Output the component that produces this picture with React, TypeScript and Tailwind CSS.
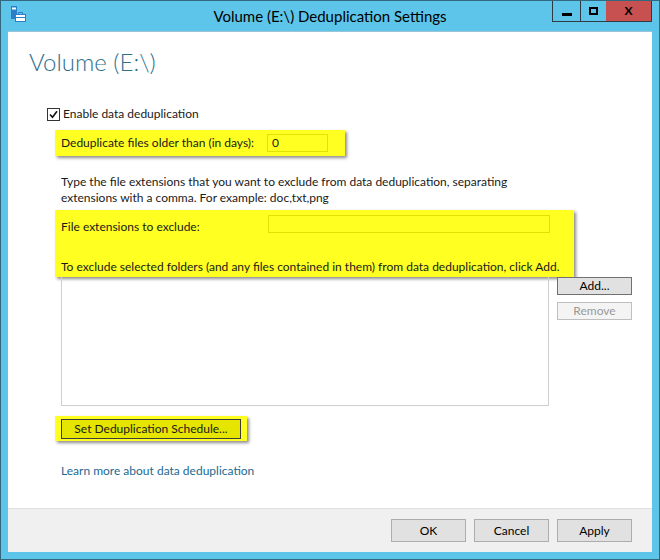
import React from "react";

function WinButton({
  children,
  disabled,
  small,
  dark,
}: {
  children: React.ReactNode;
  disabled?: boolean;
  small?: boolean;
  dark?: boolean;
}) {
  return (
    <button
      type="button"
      disabled={disabled}
      className={`${small ? "h-[18px]" : "h-[23px]"} w-[75px] border text-[12px] leading-none ${
        disabled
          ? "border-[#bfbfbf] bg-[#f4f4f4] text-[#9a9a9a]"
          : `${dark ? "border-[#707070]" : "border-[#adadad]"} bg-[#e1e1e1] text-black`
      }`}
    >
      {children}
    </button>
  );
}

function AppIcon() {
  return (
    <svg width="17" height="19" viewBox="0 0 17 19" fill="none">
      <rect x="1" y="1" width="6" height="13" fill="#2a7fc8" />
      <rect x="2" y="2.5" width="4" height="2" fill="#ffffff" />
      <rect x="5.5" y="9.5" width="10" height="7" fill="#ffffff" stroke="#2a7fc8" strokeWidth="1" />
      <path d="M8.5 9.5V7.5h4v2" stroke="#2a7fc8" strokeWidth="1" fill="none" />
      <line x1="5.5" y1="12.5" x2="15.5" y2="12.5" stroke="#2a7fc8" strokeWidth="1" />
    </svg>
  );
}

export default function App() {
  const font = "font-['Lato','Segoe_UI',sans-serif]";

  return (
    <div className={`w-[660px] h-[560px] bg-[#5cc5e9] border border-[#33677d] flex flex-col text-[#1a1a1a] ${font}`}>
      {/* title bar */}
      <div className="h-[30px] grid grid-cols-[1fr_auto_1fr]">
        <div className="pl-[9px] pt-[4px]">
          <AppIcon />
        </div>
        <div className="pt-[5px] text-[15px] text-black leading-[20px] whitespace-nowrap">Volume (E:\) Deduplication Settings</div>
        <div className="flex justify-end items-start pr-[7px]">
          <div className="flex h-[21px] border border-t-0 border-[#2e3b44]">
            <div className="w-[28px] flex items-end justify-center pb-[5px] border-r border-[#2e3b44]">
              <div className="w-[10px] h-[3px] bg-black" />
            </div>
            <div className="w-[25px] flex items-center justify-center">
              <div className="w-[9px] h-[8px] border-2 border-black" />
            </div>
            <div className="w-[45px] bg-[#c75050] flex items-center justify-center text-[12px] font-bold text-black leading-none">
              X
            </div>
          </div>
        </div>
      </div>

      {/* client area */}
      <div className="flex-1 mx-[7px] mb-[7px] bg-white border-t border-[#9cc6d8] flex flex-col">
        <div className="pl-[21px] pt-[14px] text-[24px] leading-[32px] font-light text-[#2f6f8e]">Volume (E:\)</div>

        <div className="pl-[39px] mt-[28px] flex items-center h-[16px] text-[12px]">
          <svg width="13" height="13" viewBox="0 0 13 13" className="shrink-0">
            <rect x="0.5" y="0.5" width="12" height="12" fill="#ffffff" stroke="#333333" />
            <path d="M3 6.5l2.5 2.8L10 3.2" stroke="#111111" strokeWidth="1.6" fill="none" />
          </svg>
          <span className="ml-[3px] whitespace-nowrap">Enable data deduplication</span>
        </div>

        <div className="ml-[47px] mt-[8px] w-[290px] h-[26px] bg-[#ffff22] shadow-[2px_2px_3px_rgba(0,0,0,0.45)] flex items-center pl-[6px] text-[12px]">
          <span className="w-[206px] whitespace-nowrap">Deduplicate files older than (in days):</span>
          <div className="w-[61px] h-[18px] border border-[#e2e200] pl-[4px] leading-[15px]">0</div>
        </div>

        <p className="ml-[53px] mt-[18px] w-[470px] text-[12px] leading-[16px]">
          Type the file extensions that you want to exclude from data deduplication, separating extensions with a comma. For example: doc,txt,png
        </p>

        <div className="ml-[47px] mt-[4px] w-[519px] h-[67px] bg-[#ffff22] shadow-[2px_2px_3px_rgba(0,0,0,0.45)] flex flex-col pl-[6px] text-[12px]">
          <div className="flex items-end mt-[5px] h-[18px]">
            <span className="w-[207px] whitespace-nowrap leading-[16px] translate-y-[2px]">File extensions to exclude:</span>
            <div className="w-[282px] h-[18px] border border-[#e2e200]" />
          </div>
          <div className="mt-[26px] leading-[16px] whitespace-nowrap">
            To exclude selected folders (and any files contained in them) from data deduplication, click Add.
          </div>
        </div>

        <div className="flex">
          <div className="ml-[53px] w-[488px] h-[129px] border border-t-0 border-[#cfcfcf]" />
          <div className="ml-[8px] flex flex-col gap-[7px]">
            <WinButton small dark>
              Add...
            </WinButton>
            <WinButton small disabled>
              Remove
            </WinButton>
          </div>
        </div>

        <div className="ml-[47px] mt-[10px] w-[192px] h-[25px] bg-[#ffff22] shadow-[2px_2px_3px_rgba(0,0,0,0.45)] flex items-center pl-[6px]">
          <button type="button" className="w-[180px] h-[20px] border border-[#3c3c3c] bg-[#e5e500] text-[12px] leading-none whitespace-nowrap">
            Set Deduplication Schedule...
          </button>
        </div>

        <div className="ml-[53px] mt-[22px] text-[12px] leading-[16px] text-[#1c6a92] whitespace-nowrap">Learn more about data deduplication</div>

        <div className="mt-auto h-[44px] bg-[#f0f0f0] border-t border-[#dfdfdf] flex justify-end items-start gap-[8px] pr-[20px] pt-[10px]">
          <WinButton>OK</WinButton>
          <WinButton>Cancel</WinButton>
          <WinButton>Apply</WinButton>
        </div>
      </div>
    </div>
  );
}
